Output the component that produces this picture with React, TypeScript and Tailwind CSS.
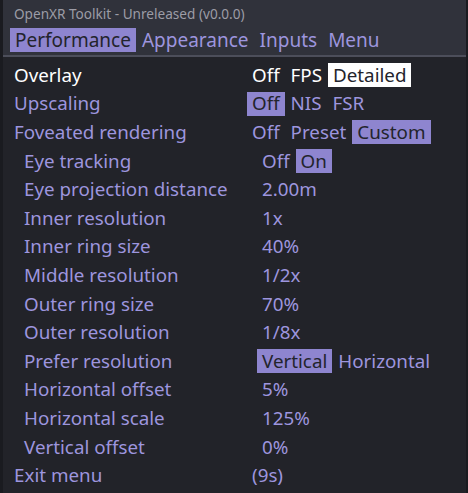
import React from 'react';

type Row = {
  label: string;
  sub?: boolean;
  active?: boolean;
  options: string[];
  selected?: number;
};

const rows: Row[] = [
  { label: 'Overlay', active: true, options: ['Off', 'FPS', 'Detailed'], selected: 2 },
  { label: 'Upscaling', options: ['Off', 'NIS', 'FSR'], selected: 0 },
  { label: 'Foveated rendering', options: ['Off', 'Preset', 'Custom'], selected: 2 },
  { label: 'Eye tracking', sub: true, options: ['Off', 'On'], selected: 1 },
  { label: 'Eye projection distance', sub: true, options: ['2.00m'] },
  { label: 'Inner resolution', sub: true, options: ['1x'] },
  { label: 'Inner ring size', sub: true, options: ['40%'] },
  { label: 'Middle resolution', sub: true, options: ['1/2x'] },
  { label: 'Outer ring size', sub: true, options: ['70%'] },
  { label: 'Outer resolution', sub: true, options: ['1/8x'] },
  { label: 'Prefer resolution', sub: true, options: ['Vertical', 'Horizontal'], selected: 0 },
  { label: 'Horizontal offset', sub: true, options: ['5%'] },
  { label: 'Horizontal scale', sub: true, options: ['125%'] },
  { label: 'Vertical offset', sub: true, options: ['0%'] },
  { label: 'Exit menu', options: ['(9s)'] },
];

const tabs = ['Performance', 'Appearance', 'Inputs', 'Menu'];

export default function App() {
  return (
    <div
      className="w-[468px] h-[493px] overflow-hidden bg-[#222329] border-l-[3px] border-r-[2px] border-[#1a1b20] flex flex-col"
      style={{ fontFamily: '"Noto Sans", "Open Sans", sans-serif' }}
    >
      {/* title + tabs */}
      <div className="bg-[#30323b] h-[55px] flex flex-col">
        <div className="h-[28px] pl-[11px] flex items-center text-[13.6px] text-[#9c9ca6]">
          OpenXR Toolkit - Unreleased (v0.0.0)
        </div>
        <div className="flex items-center gap-[1px] pl-[7px] text-[19px] leading-none">
          {tabs.map((t, i) => (
            <span
              key={t}
              className={
                i === 0
                  ? 'h-[24px] px-[5px] flex items-center bg-[#8e85cf] text-[#23242c]'
                  : 'h-[24px] px-[5px] flex items-center text-[#9d95de]'
              }
            >
              {t}
            </span>
          ))}
        </div>
      </div>
      <div className="h-[2px] bg-[#4c4e5a]" />

      {/* settings */}
      <div className="pt-[4px] flex flex-col text-[18.8px] leading-none">
        {rows.map((r) => (
          <div
            key={r.label}
            className={`h-[28.6px] flex items-center ${r.sub ? 'pl-[21px]' : 'pl-[11px]'} ${
              r.active ? 'text-white' : 'text-[#9d95de]'
            }`}
          >
            <span className="w-[233px] shrink-0 whitespace-nowrap">{r.label}</span>
            <div className="flex items-center gap-[1px]">
              {r.options.map((o, i) => {
                let cls = 'h-[24px] px-[5px] flex items-center whitespace-nowrap';
                if (i === r.selected) {
                  cls += r.active ? ' bg-white text-[#23242c]' : ' bg-[#8e85cf] text-[#23242c]';
                }
                return (
                  <span key={o} className={cls}>
                    {o}
                  </span>
                );
              })}
            </div>
          </div>
        ))}
      </div>
    </div>
  );
}
